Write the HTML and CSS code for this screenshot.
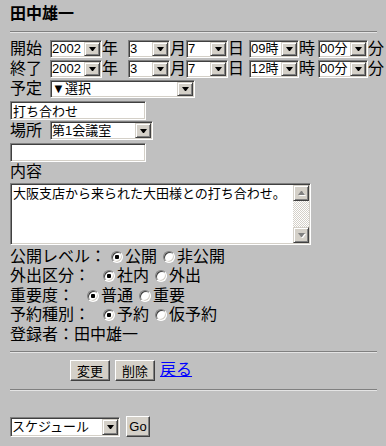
FILE: index.html
```html
<!DOCTYPE html>
<html lang="ja">
<head>
	<meta charset="UTF-8">
	<title>スケジュール変更</title>
	<link rel="stylesheet" href="styles.css">
</head>
<body>
	<div id="wrap">
		<h1 class="owner">田中雄一</h1>
		<hr class="rule">
		<form class="sched">
			<div class="row">
				<span>開始</span>
				<span class="sel w52 ml8"><select><option>2002</option></select><b></b></span>
				<span>年</span>
				<span class="sel w42 ml10"><select><option>3</option></select><b></b></span>
				<span>月</span>
				<span class="sel w42"><select><option>7</option></select><b></b></span>
				<span>日</span>
				<span class="sel w50 ml5"><select><option>09時</option></select><b></b></span>
				<span>時</span>
				<span class="sel w50 ml3"><select><option>00分</option></select><b></b></span>
				<span>分</span>
			</div>
			<div class="row">
				<span>終了</span>
				<span class="sel w52 ml8"><select><option>2002</option></select><b></b></span>
				<span>年</span>
				<span class="sel w42 ml10"><select><option>3</option></select><b></b></span>
				<span>月</span>
				<span class="sel w42"><select><option>7</option></select><b></b></span>
				<span>日</span>
				<span class="sel w50 ml5"><select><option>12時</option></select><b></b></span>
				<span>時</span>
				<span class="sel w50 ml3"><select><option>00分</option></select><b></b></span>
				<span>分</span>
			</div>
			<div class="row">
				<span>予定</span>
				<span class="sel w145 ml8"><select><option>▼選択</option></select><b></b></span>
			</div>
			<input class="txt first" type="text" value="打ち合わせ">
			<div class="row place">
				<span>場所</span>
				<span class="sel tall w103 ml8"><select><option>第1会議室</option></select><b></b></span>
			</div>
			<input class="txt" type="text" value="">
			<div class="row">
				<span>内容</span>
			</div>
			<div class="memo">
				<textarea>大阪支店から来られた大田様との打ち合わせ。</textarea>
				<div class="vbar">
					<span class="arrow up"></span>
					<span class="track"></span>
					<span class="arrow down"></span>
				</div>
			</div>
			<div class="opts">
				<div class="opt">
					<span>公開レベル：</span>
					<input type="radio" name="open" class="r1 near" checked><span class="lbl">公開</span>
					<input type="radio" name="open" class="r2"><span class="lbl">非公開</span>
				</div>
				<div class="opt">
					<span>外出区分：</span>
					<input type="radio" name="out" class="r1" checked><span class="lbl">社内</span>
					<input type="radio" name="out" class="r2"><span class="lbl">外出</span>
				</div>
				<div class="opt">
					<span>重要度：</span>
					<input type="radio" name="imp" class="r1" checked><span class="lbl">普通</span>
					<input type="radio" name="imp" class="r2"><span class="lbl">重要</span>
				</div>
				<div class="opt">
					<span>予約種別：</span>
					<input type="radio" name="kind" class="r1" checked><span class="lbl">予約</span>
					<input type="radio" name="kind" class="r2"><span class="lbl">仮予約</span>
				</div>
				<div class="opt">
					<span>登録者：田中雄一</span>
				</div>
			</div>
			<hr class="rule mid">
			<div class="actions">
				<button type="button" class="btn">変更</button>
				<button type="button" class="btn">削除</button>
				<a href="#" class="back">戻る</a>
			</div>
			<hr class="rule low">
			<div class="jump">
				<span class="sel big w110"><select><option>スケジュール</option></select><b></b></span>
				<button type="button" class="btn go">Go</button>
			</div>
		</form>
	</div>
</body>
</html>
```

FILE: styles.css
```css
*{margin: 0;padding: 0;}
html,body{background: #c0c0c0;}
body{
	font-family: "Liberation Sans", "Noto Sans CJK JP", sans-serif;
	font-size: 16px;
	line-height: 20px;
	color: #000;
}
#wrap{
	width: 367px;
	padding-left: 10px;
}
.owner{
	margin-top: 4px;
	font-size: 16px;
	line-height: 20px;
	font-weight: bold;
}
.rule{
	border: none;
	border-top: 1px solid #808080;
	border-bottom: 1px solid #e4e4e4;
	height: 0;
	margin: 7px 0 6px;
}
.rule.mid{margin: 6px 0 0;}
.rule.low{margin: 8px 0 0;}

.row{
	display: flex;
	align-items: center;
	height: 20px;
	white-space: nowrap;
}
.row > *{flex: none;}
.row.place{height: 21px;}

/* classic sunken select */
.sel{
	display: inline-flex;
	box-sizing: border-box;
	height: 18px;
	padding: 1px;
	border: 1px solid;
	border-color: #808080 #fff #fff #808080;
	box-shadow: inset 1px 1px #404040, inset -1px -1px #d4d0c8;
	background: #fff;
}
.sel.tall{height: 19px;}
.sel.big{height: 20px;margin-top: 1px;}
.sel select{
	-webkit-appearance: none;
	appearance: none;
	flex: 1;
	min-width: 0;
	border: none;
	outline: none;
	background: none;
	font-family: "Liberation Sans", "Noto Sans CJK JP", sans-serif;
	font-size: 13px;
	line-height: 14px;
	height: 100%;
	padding: 0;
	color: #000;
}
.sel b{
	flex: none;
	width: 16px;
	box-sizing: border-box;
	display: flex;
	align-items: center;
	justify-content: center;
	background: #d4d0c8;
	border: 1px solid;
	border-color: #d4d0c8 #404040 #404040 #d4d0c8;
	box-shadow: inset 1px 1px #fff, inset -1px -1px #808080;
}
.sel b::after{
	content: '';
	width: 1px;
	border-top: 4px solid #000;
	border-left: 3px solid transparent;
	border-right: 3px solid transparent;
}
.w42{width: 42px;}
.w50{width: 50px;}
.w52{width: 52px;}
.w103{width: 103px;}
.w110{width: 110px;}
.w145{width: 145px;}
.ml3{margin-left: 3px;}
.ml5{margin-left: 5px;}
.ml8{margin-left: 8px;}
.ml10{margin-left: 10px;}

.txt{
	display: block;
	box-sizing: border-box;
	width: 136px;
	height: 19px;
	margin-top: 2px;
	padding: 0 2px;
	border: 1px solid;
	border-color: #808080 #fff #fff #808080;
	box-shadow: inset 1px 1px #404040, inset -1px -1px #d4d0c8;
	background: #fff;
	outline: none;
	font-family: "Liberation Sans", "Noto Sans CJK JP", sans-serif;
	font-size: 13px;
}
.txt.first{margin-top: 2px;}

.memo{
	display: flex;
	box-sizing: border-box;
	width: 301px;
	height: 62px;
	margin-top: 1px;
	padding: 1px;
	border: 1px solid;
	border-color: #808080 #fff #fff #808080;
	box-shadow: inset 1px 1px #404040, inset -1px -1px #d4d0c8;
	background: #fff;
}
.memo textarea{
	flex: 1;
	border: none;
	outline: none;
	resize: none;
	background: none;
	padding: 1px 1px;
	font-family: "Liberation Sans", "Noto Sans CJK JP", sans-serif;
	font-size: 13px;
	line-height: 15px;
	overflow: hidden;
}
.vbar{
	width: 16px;
	display: flex;
	flex-direction: column;
	background: repeating-conic-gradient(#fff 0 25%, #d4d0c8 0 50%) 0 0/2px 2px;
}
.vbar .track{flex: 1;}
.vbar .arrow{
	height: 16px;
	box-sizing: border-box;
	display: flex;
	align-items: center;
	justify-content: center;
	background: #d4d0c8;
	border: 1px solid;
	border-color: #d4d0c8 #404040 #404040 #d4d0c8;
	box-shadow: inset 1px 1px #fff, inset -1px -1px #808080;
}
.vbar .arrow::after{
	content: '';
	width: 1px;
	border-left: 3px solid transparent;
	border-right: 3px solid transparent;
	filter: drop-shadow(1px 1px 0 #fff);
}
.vbar .up::after{border-bottom: 4px solid #808080;}
.vbar .down::after{border-top: 4px solid #808080;}

.opts{margin-top: 2px;}
.opt{
	display: flex;
	align-items: center;
	height: 19.5px;
	white-space: nowrap;
}
.opt input{
	-webkit-appearance: none;
	appearance: none;
	flex: none;
	width: 12px;
	height: 12px;
	box-sizing: border-box;
	border-radius: 50%;
	border: 1px solid;
	border-color: #808080 #fff #fff #808080;
	box-shadow: inset 1px 1px #404040, inset -1px -1px #d4d0c8;
	background: #fff;
	margin: 0;
}
.opt input:checked{
	background: radial-gradient(circle, #000 0 2px, #fff 2.5px);
}
.opt input.r1{margin-left: 13px;}
.opt input.r1.near{margin-left: 5px;}
.opt input.r2{margin-left: 6px;}
.opt .lbl{margin-left: 2px;}

.actions{
	display: flex;
	align-items: center;
	margin-top: 7px;
	padding-left: 60px;
	height: 21px;
}
.btn{
	box-sizing: border-box;
	height: 21px;
	padding: 0 6px;
	margin-right: 5px;
	background: #d4d0c8;
	border: 1px solid;
	border-color: #fff #404040 #404040 #fff;
	box-shadow: inset -1px -1px #808080;
	font-family: "Liberation Sans", "Noto Sans CJK JP", sans-serif;
	font-size: 13px;
	color: #000;
}
.back{
	color: #00f;
	text-decoration: underline;
	font-size: 16px;
}
.jump{
	display: flex;
	align-items: flex-start;
	margin-top: 25px;
}
.btn.go{
	width: 24px;
	padding: 0;
	margin-left: 6px;
}
```
